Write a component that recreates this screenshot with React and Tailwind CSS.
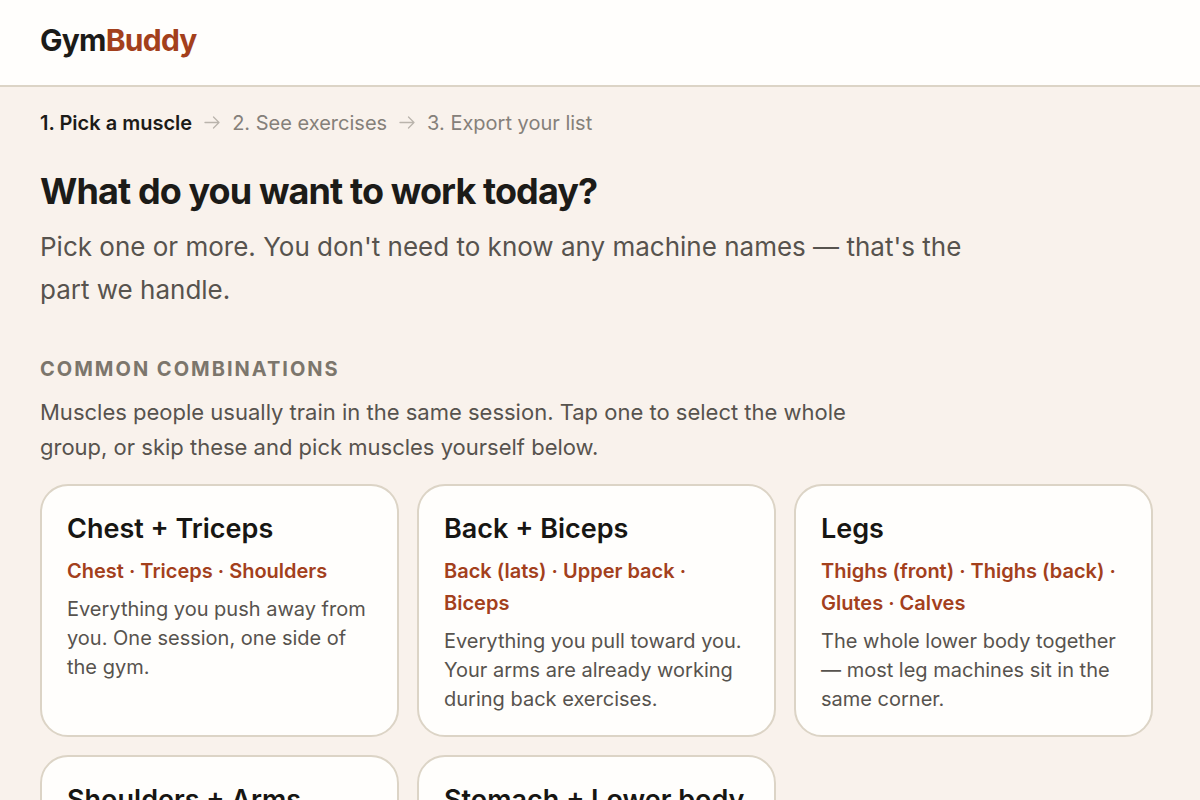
const combos = [
  { title: "Chest + Triceps", muscles: "Chest · Triceps · Shoulders", text: "Everything you push away from you. One session, one side of the gym." },
  { title: "Back + Biceps", muscles: "Back (lats) · Upper back · Biceps", text: "Everything you pull toward you. Your arms are already working during back exercises." },
  { title: "Legs", muscles: "Thighs (front) · Thighs (back) · Glutes · Calves", text: "The whole lower body together — most leg machines sit in the same corner." },
  { title: "Shoulders + Arms" },
  { title: "Stomach + Lower body" },
];

function Arrow() {
  return (
    <svg aria-hidden="true" viewBox="0 0 16 14" className="h-3.5 w-4 shrink-0 fill-none stroke-[#bab4ac]" strokeWidth="1.3" strokeLinecap="round" strokeLinejoin="round">
      <path d="M1 6.5H15M9.5 1L15 6.5L9.5 12" />
    </svg>
  );
}

function ComboCard({ title, muscles, text }) {
  return (
    <button type="button" className="flex flex-col items-start rounded-[28px] border-2 border-[#dcd4c6] bg-[#fffefc] px-[25px] pt-[25px] pb-[21px] text-left">
      <span className="text-[27px] leading-9 font-semibold text-[#171613]">{title}</span>
      {muscles && <span className="mt-2 text-[20px] leading-8 font-semibold text-[#a3401c]">{muscles}</span>}
      {text && <span className="mt-2 text-[20px] leading-[29px] text-[#57534e]">{text}</span>}
    </button>
  );
}

export default function App() {
  return (
    <div className="min-h-screen bg-[#f9f2ec] font-['Inter',sans-serif] text-[#1c1b18]">
      <header className="border-b-2 border-[#dcd4c6] bg-[#fffefc] px-10 pt-5 pb-[25px]">
        <a href="#" className="block text-[30px] leading-10 font-bold tracking-tight">
          Gym<span className="text-[#a3401c]">Buddy</span>
        </a>
      </header>
      <main className="px-10 pt-5 pb-10">
        <ol className="flex items-center gap-3 text-[20px] leading-8 text-[#85807a]">
          <li className="font-semibold text-[#1c1b18]">1. Pick a muscle</li>
          <li><Arrow /></li>
          <li>2. See exercises</li>
          <li><Arrow /></li>
          <li>3. Export your list</li>
        </ol>
        <h1 className="mt-7 text-[36px] leading-[48px] font-bold tracking-tight">What do you want to work today?</h1>
        <p className="mt-[10px] max-w-[940px] text-[26px] leading-[43px] text-[#57534e]">
          Pick one or more. You don't need to know any machine names — that's the part we handle.
        </p>
        <section>
          <h2 className="mt-[42px] text-[20px] leading-8 font-bold tracking-widest text-[#7c766c] uppercase">Common combinations</h2>
          <p className="mt-[10px] max-w-[860px] text-[22px] leading-[35px] text-[#57534e]">
            Muscles people usually train in the same session. Tap one to select the whole group, or skip these and pick muscles yourself below.
          </p>
          <div className="mt-[19px] mr-[7px] grid grid-cols-3 gap-[18px]">
            {combos.map((combo) => (
              <ComboCard key={combo.title} {...combo} />
            ))}
          </div>
        </section>
      </main>
    </div>
  );
}
